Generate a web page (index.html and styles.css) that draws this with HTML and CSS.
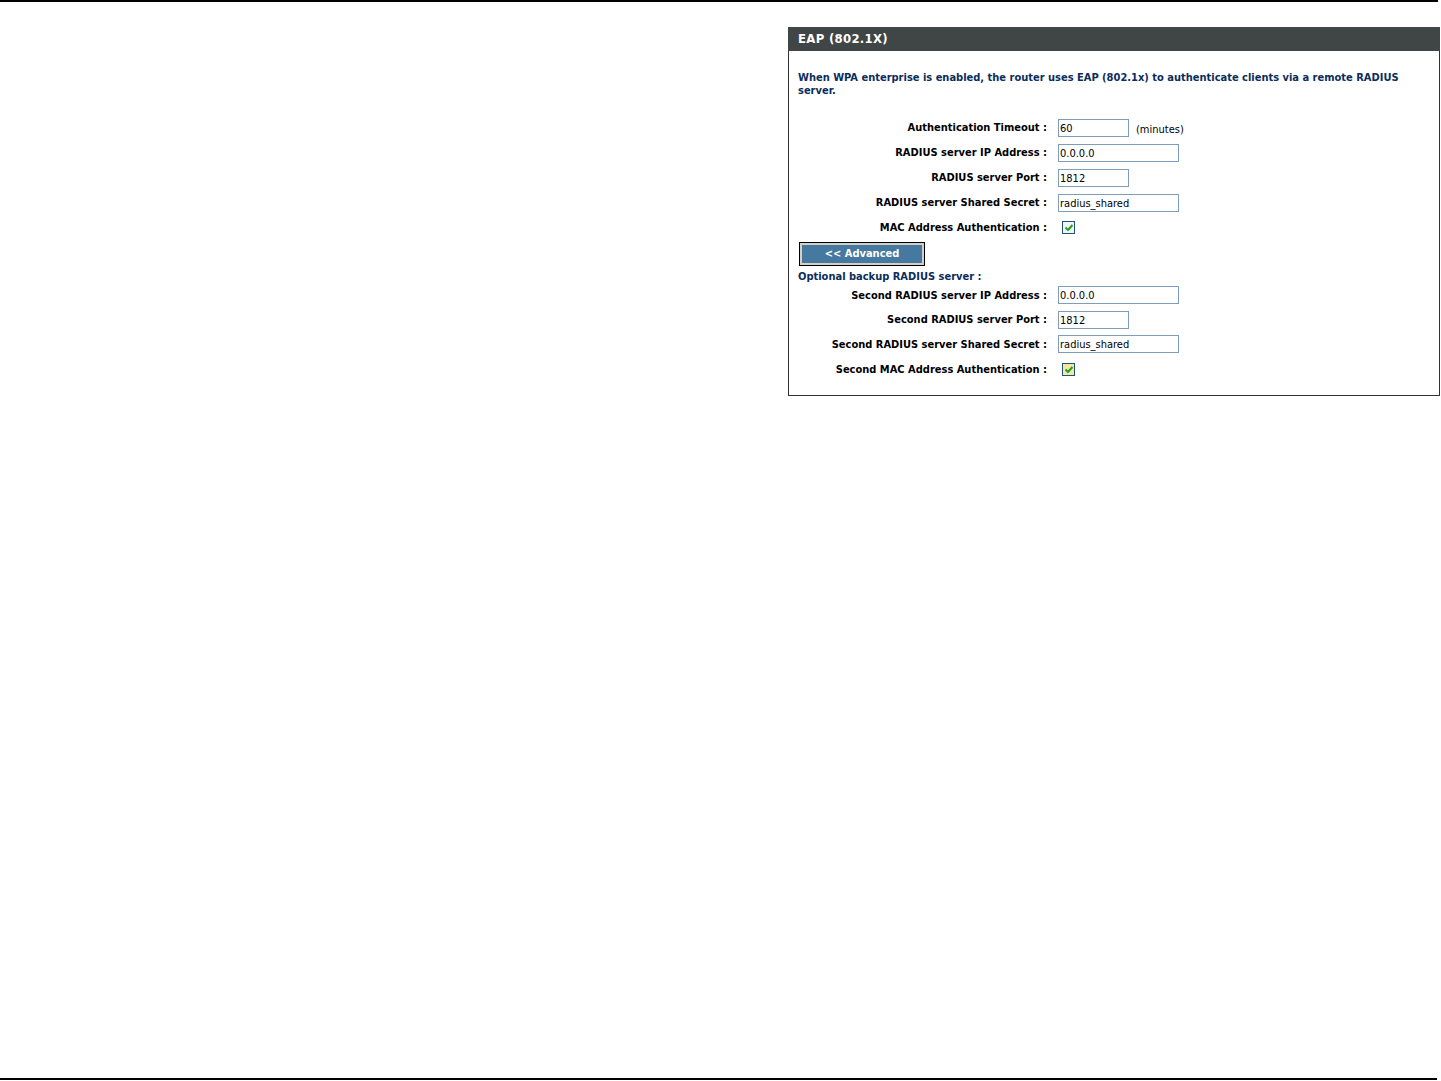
FILE: index.html
```html
<!DOCTYPE html>
<html>
<head>
  <title>EAP (802.1X)</title>
  <link rel="stylesheet" href="styles.css">
</head>
<body>
<div class="page">
  <div class="rule top"></div>
  <div class="content">
    <div class="box">
      <div class="box-head">EAP (802.1X)</div>
      <div class="box-body">
        <p class="intro">When WPA enterprise is enabled, the router uses EAP (802.1x) to authenticate clients via a remote RADIUS server.</p>

        <div class="form">
          <div class="row">
            <label>Authentication Timeout :</label>
            <div class="field"><input class="txt short" type="text" value="60"> <span class="unit">(minutes)</span></div>
          </div>
          <div class="row">
            <label>RADIUS server IP Address :</label>
            <div class="field"><input class="txt long" type="text" value="0.0.0.0"></div>
          </div>
          <div class="row">
            <label>RADIUS server Port :</label>
            <div class="field"><input class="txt short" type="text" value="1812"></div>
          </div>
          <div class="row">
            <label>RADIUS server Shared Secret :</label>
            <div class="field"><input class="txt long" type="text" value="radius_shared"></div>
          </div>
          <div class="row">
            <label>MAC Address Authentication :</label>
            <div class="field"><span class="check"><svg width="8" height="7" viewBox="0 0 8 7"><path d="M0.5 3.5 L3 6 L7.5 1" fill="none" stroke="#21a121" stroke-width="2"/></svg></span></div>
          </div>
        </div>

        <div class="btn-wrap"><span class="btn">&lt;&lt; Advanced</span></div>
        <p class="sub">Optional backup RADIUS server :</p>

        <div class="form second">
          <div class="row">
            <label>Second RADIUS server IP Address :</label>
            <div class="field"><input class="txt long" type="text" value="0.0.0.0"></div>
          </div>
          <div class="row">
            <label>Second RADIUS server Port :</label>
            <div class="field"><input class="txt short" type="text" value="1812"></div>
          </div>
          <div class="row">
            <label>Second RADIUS server Shared Secret :</label>
            <div class="field"><input class="txt long" type="text" value="radius_shared"></div>
          </div>
          <div class="row">
            <label>Second MAC Address Authentication :</label>
            <div class="field"><span class="check hover"><svg width="8" height="7" viewBox="0 0 8 7"><path d="M0.5 3.5 L3 6 L7.5 1" fill="none" stroke="#21a121" stroke-width="2"/></svg></span></div>
          </div>
        </div>
      </div>
    </div>
  </div>
  <div class="rule bottom"></div>
</div>
</body>
</html>
```
FILE: styles.css
```css
html, body {
  margin: 0;
  padding: 0;
  background: #fff;
}
body {
  font-family: "DejaVu Sans Condensed", "DejaVu Sans", sans-serif;
  font-size: 11px;
  color: #000;
}
.page {
  height: 1081px;
  display: flex;
  flex-direction: column;
}
.rule {
  height: 2px;
  background: #000;
  width: 1438px;
}
.rule.bottom {
  margin-top: auto;
  margin-bottom: 1px;
  width: 1437px;
}
.content {
  flex: 1;
  display: flex;
  justify-content: flex-end;
  padding-top: 25px;
  padding-right: 1px;
}
.box {
  width: 650px;
  height: 368px;
  border: 1px solid #333;
  border-top: none;
  align-self: flex-start;
}
.box-head {
  background: #404545;
  color: #fff;
  height: 24px;
  line-height: 24px;
  padding-left: 10px;
  font-size: 13px;
  font-weight: bold;
  letter-spacing: 0.3px;
  margin-left: -1px;
  margin-right: -1px;
}
.box-body {
  padding: 0 0 0 9px;
}
.intro {
  margin: 20px 30px 0 0;
  color: #0b2d5b;
  font-weight: bold;
  line-height: 13px;
}
.form {
  margin-top: 18px;
}
.form.second {
  margin-top: 0;
}
.row {
  display: grid;
  grid-template-columns: 249px 1fr;
  column-gap: 11px;
  height: 25px;
  align-items: center;
}
.form.second .row {
  height: 24.6px;
}
.row label {
  text-align: right;
  font-weight: bold;
  white-space: nowrap;
}
.field {
  display: flex;
  align-items: center;
}
.txt {
  box-sizing: border-box;
  height: 18px;
  border: 1px solid #7f9db9;
  padding: 1px 1px 0;
  margin: 0;
  font-family: "DejaVu Sans Condensed", "DejaVu Sans", sans-serif;
  font-size: 11px;
  line-height: 14px;
  color: #000;
  background: #fff;
  outline: none;
}
.txt.short {
  width: 71px;
}
.txt.long {
  width: 121px;
}
.unit {
  margin-left: 7px;
  margin-top: 3px;
}
.check {
  box-sizing: border-box;
  width: 13px;
  height: 13px;
  margin-left: 4px;
  border: 1px solid #1c5180;
  background: #f4f4f0;
  display: flex;
  align-items: center;
  justify-content: center;
}
.check.hover {
  background: #f8e7a3;
}
.btn-wrap {
  margin-top: 2px;
  padding-left: 1px;
}
.btn {
  display: inline-block;
  box-sizing: border-box;
  width: 126px;
  height: 24px;
  border: 1px solid #000;
  box-shadow: inset 0 0 0 2px #d4d0c8;
  background: #46799f;
  color: #fff;
  font-weight: bold;
  line-height: 22px;
  text-align: center;
}
.sub {
  margin: 4px 0 0;
  color: #0b2d5b;
  font-weight: bold;
  line-height: 13px;
}
```
